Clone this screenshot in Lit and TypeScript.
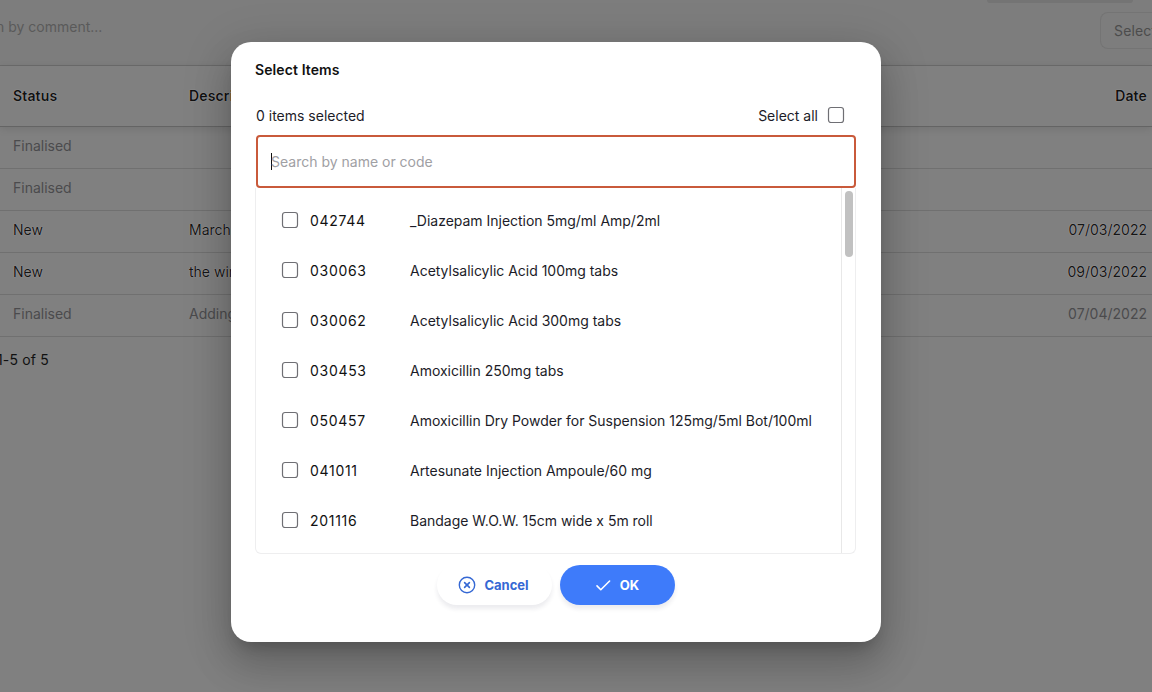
import { LitElement, html, css, svg } from "lit";
import { customElement, property } from "lit/decorators.js";

interface Item {
  code: string;
  name: string;
}

interface Row {
  status: string;
  description: string;
  date: string;
}

const ITEMS: Item[] = [
  { code: "042744", name: "_Diazepam Injection 5mg/ml Amp/2ml" },
  { code: "030063", name: "Acetylsalicylic Acid 100mg tabs" },
  { code: "030062", name: "Acetylsalicylic Acid 300mg tabs" },
  { code: "030453", name: "Amoxicillin 250mg tabs" },
  { code: "050457", name: "Amoxicillin Dry Powder for Suspension 125mg/5ml Bot/100ml" },
  { code: "041011", name: "Artesunate Injection Ampoule/60 mg" },
  { code: "201116", name: "Bandage W.O.W. 15cm wide x 5m roll" },
];

const ROWS: Row[] = [
  { status: "Finalised", description: "", date: "" },
  { status: "Finalised", description: "", date: "" },
  { status: "New", description: "March", date: "07/03/2022" },
  { status: "New", description: "the win", date: "09/03/2022" },
  { status: "Finalised", description: "Adding", date: "07/04/2022" },
];

@customElement("check-box")
class CheckBox extends LitElement {
  static styles = css`
    :host {
      display: block;
      width: 18px;
      height: 18px;
      flex: none;
    }
    .icon {
      display: block;
    }
  `;
  render() {
    return html`<svg class="icon" width="18" height="18" viewBox="0 0 18 18">
      ${svg`<rect x="1.5" y="1.5" width="15" height="15" rx="2.5" fill="#fff" stroke="#6f6f74" stroke-width="1.2"/>`}
    </svg>`;
  }
}

@customElement("requisition-table")
class RequisitionTable extends LitElement {
  static styles = css`
    :host {
      display: flex;
      flex-direction: column;
      height: 692px;
      background: #808080;
      color: #4b4b4d;
      overflow: hidden;
    }
    .toolbar {
      display: flex;
      justify-content: space-between;
      height: 65px;
      background: #7d7d7d;
      border-bottom: 1px solid #6b6b6b;
    }
    .filter {
      margin: 17px 0 0 -4px;
      line-height: 20px;
      color: #5a5a5a;
      white-space: nowrap;
    }
    .top {
      display: flex;
      flex-direction: column;
      align-items: flex-end;
      gap: 10px;
      width: 168px;
    }
    .tab {
      width: 146px;
      height: 3px;
      margin-right: 19px;
      border-radius: 0 0 12px 12px;
      background: #747474;
    }
    .select {
      box-sizing: border-box;
      width: 52px;
      height: 37px;
      margin-top: -1px;
      border: 1px solid #747474;
      border-right: 0;
      border-radius: 8px 0 0 8px;
      padding-left: 13px;
      line-height: 36px;
      overflow: hidden;
      white-space: nowrap;
      letter-spacing: 0.15px;
      color: #4c4c4c;
    }
    .row {
      box-sizing: border-box;
      display: grid;
      grid-template-columns: 176px 1fr 120px;
      align-items: center;
      height: 42px;
      padding: 0 5px 5px 13px;
      border-bottom: 1px solid #707070;
      white-space: nowrap;
    }
    .row.head {
      height: 61px;
      padding-bottom: 2px;
      border-bottom-color: #646464;
      color: #111;
      font-weight: 600;
      letter-spacing: 0.15px;
      box-shadow: 0 2px 8px rgba(0, 0, 0, 0.1);
      text-shadow: 0 0 1px rgba(255, 255, 255, 0.5);
    }
    .row.active {
      color: #151515;
      text-shadow: 0 0 1px rgba(255, 255, 255, 0.5);
    }
    .date {
      text-align: right;
    }
    .count {
      margin: 13px 0 0 -3px;
      line-height: 20px;
      letter-spacing: 0.15px;
      color: #111;
    }
  `;
  render() {
    return html`
      <div class="toolbar">
        <div class="filter">n by comment...</div>
        <div class="top">
          <div class="tab"></div>
          <div class="select">Select</div>
        </div>
      </div>
      <div class="row head">
        <span>Status</span><span>Description</span><span class="date">Date</span>
      </div>
      ${ROWS.map(
        (r) => html`<div class="row ${r.status === "New" ? "active" : ""}">
          <span>${r.status}</span><span>${r.description}</span><span class="date">${r.date}</span>
        </div>`
      )}
      <div class="count">1-5 of 5</div>
    `;
  }
}

@customElement("item-dialog")
class ItemDialog extends LitElement {
  @property({ attribute: false }) items: Item[] = [];

  static styles = css`
    :host {
      box-sizing: border-box;
      display: flex;
      flex-direction: column;
      width: 650px;
      height: 600px;
      padding: 18px 25px 0;
      border-radius: 20px;
      background: #fff;
      color: #1c1c28;
      box-shadow: 0 11px 15px -7px rgba(0, 0, 0, 0.2), 0 24px 38px 3px rgba(0, 0, 0, 0.14),
        0 9px 46px 8px rgba(0, 0, 0, 0.12);
    }
    .title {
      line-height: 20px;
      margin-left: -1px;
      font-weight: 600;
      letter-spacing: 0.1px;
      color: #111;
    }
    .summary {
      display: flex;
      justify-content: space-between;
      align-items: center;
      height: 20px;
      margin-top: 25px;
      padding-right: 11px;
    }
    .all {
      display: flex;
      align-items: center;
      gap: 9px;
    }
    .search {
      box-sizing: border-box;
      display: flex;
      align-items: center;
      height: 53px;
      margin-top: 10px;
      padding-left: 13px;
      border: 2px solid #c95a3b;
      border-radius: 4px;
      color: #a0a0a4;
    }
    .caret {
      width: 1px;
      height: 17px;
      margin-right: -1px;
      background: #111;
    }
    .list {
      box-sizing: border-box;
      display: flex;
      height: 366px;
      margin: 0 0 0 -1px;
      border: 1px solid #eeeeef;
      border-top: 0;
      border-radius: 0 0 6px 6px;
      overflow: hidden;
    }
    .items {
      flex: 1;
      padding-top: 7px;
    }
    .item {
      display: flex;
      align-items: center;
      height: 50px;
      padding-left: 25px;
      white-space: nowrap;
      letter-spacing: -0.015px;
    }
    .code {
      width: 100px;
      margin-left: 11px;
      letter-spacing: 0.7px;
      color: #111;
    }
    .track {
      box-sizing: border-box;
      width: 14px;
      padding: 3px 2px 0 3px;
      border-left: 1px solid #e8e8e8;
    }
    .thumb {
      height: 66px;
      border-radius: 4px;
      background: #c1c1c1;
    }
    .actions {
      display: flex;
      gap: 8px;
      margin: 10.5px 0 0 181px;
    }
    .button {
      display: flex;
      align-items: center;
      justify-content: center;
      width: 115px;
      height: 40px;
      border-radius: 20px;
      font-size: 13px;
      font-weight: 700;
      color: #3568d4;
      background: #fff;
      box-shadow: 0 4px 4px rgba(40, 40, 80, 0.09);
    }
    .button.primary {
      color: #fff;
      background: #3e7bfa;
    }
    .glyph {
      flex: none;
      margin: 0 8px 0 -2px;
    }
  `;
  render() {
    return html`
      <div class="title">Select Items</div>
      <div class="summary">
        <span>0 items selected</span>
        <span class="all">Select all <check-box></check-box></span>
      </div>
      <div class="search"><span class="caret"></span><span>Search by name or code</span></div>
      <div class="list">
        <div class="items">
          ${this.items.map(
            (i) => html`<div class="item">
              <check-box></check-box><span class="code">${i.code}</span><span>${i.name}</span>
            </div>`
          )}
        </div>
        <div class="track"><div class="thumb"></div></div>
      </div>
      <div class="actions">
        <div class="button">
          <svg class="glyph" width="18" height="18" viewBox="0 0 18 18" fill="none" stroke="currentColor" stroke-width="1.4" stroke-linecap="round">
            <circle cx="9" cy="9" r="7.7" />
            <path d="M6.6 6.6l4.8 4.8M11.4 6.6l-4.8 4.8" stroke-width="1.6" />
          </svg>
          Cancel
        </div>
        <div class="button primary">
          <svg class="glyph" width="18" height="18" viewBox="0 0 18 18" fill="none" stroke="currentColor" stroke-width="1.6" stroke-linecap="round" stroke-linejoin="round">
            <path d="M3 9.9l3.8 3.8L15.6 5" />
          </svg>
          OK
        </div>
      </div>
    `;
  }
}

@customElement("app-root")
class AppRoot extends LitElement {
  static styles = css`
    :host {
      display: block;
      position: relative;
      width: 1152px;
      height: 692px;
      overflow: hidden;
      font-family: Inter, sans-serif;
      font-size: 14px;
    }
    .dialog {
      position: absolute;
      left: 231px;
      top: 42px;
    }
  `;
  render() {
    return html`
      <requisition-table></requisition-table>
      <item-dialog class="dialog" .items=${ITEMS}></item-dialog>
    `;
  }
}
